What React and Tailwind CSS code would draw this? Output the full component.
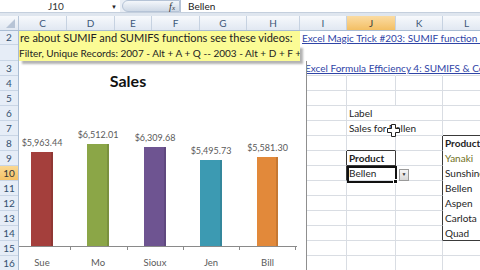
import React from "react";

const RC = {
  g: "border-r border-r-[#d9dde3]",
  d: "border-r border-r-[#3a3a3a]",
  n: "border-r border-r-transparent",
};
const BC = {
  g: "border-b border-b-[#d9dde3]",
  d: "border-b border-b-[#3a3a3a]",
  n: "border-b border-b-transparent",
};

function Cell({ r = "g", b = "g", children, cls = "" }) {
  return (
    <div
      className={`${RC[r]} ${BC[b]} flex items-center pl-[2px] whitespace-nowrap text-[10px] leading-none text-[#1e1e1e] ${cls}`}
    >
      {children}
    </div>
  );
}

const rowLabels = [
  ["2", "h-[14px]"],
  ["", "h-[16px]"],
  ["3", "h-[15px]"],
  ["4", "h-[15px]"],
  ["5", "h-[15px]"],
  ["6", "h-[15px]"],
  ["7", "h-[15px]"],
  ["8", "h-[15px]"],
  ["9", "h-[15px]"],
  ["10", "h-[15px]"],
  ["11", "h-[15px]"],
  ["12", "h-[15px]"],
  ["13", "h-[15px]"],
  ["14", "h-[15px]"],
  ["15", "h-[15px]"],
  ["16", "h-[15px]"],
];

const bars = [
  { n: "Sue", v: "$5,963.44", x: 12, w: 22, top: 91, c: "#a43f3c" },
  { n: "Mo", v: "$6,512.01", x: 68, w: 22, top: 83, c: "#8ba647" },
  { n: "Sioux", v: "$6,309.68", x: 125, w: 22, top: 86, c: "#6e5491" },
  { n: "Jen", v: "$5,495.73", x: 181, w: 22, top: 99, c: "#3c9ab2" },
  { n: "Bill", v: "$5,581.30", x: 238, w: 21, top: 96, c: "#e2893a" },
];

function Chart() {
  return (
    <svg width="287" height="210" className="block">
      <text x="109" y="26" textAnchor="middle" fontSize="16" fontWeight="700" fill="#111" fontFamily="Lato, sans-serif">
        Sales
      </text>
      {bars.map((b) => (
        <g key={b.n}>
          <rect x={b.x} y={b.top} width={b.w} height={185 - b.top} fill={b.c} />
          <rect x={b.x + b.w - 2} y={b.top} width={2} height={185 - b.top} fill="#000" opacity="0.12" />
          <text x={b.x + b.w / 2} y={b.top - 6.5} textAnchor="middle" fontSize="9" fill="#5a5a5a" fontFamily="Lato, sans-serif">
            {b.v}
          </text>
          <text x={b.x + b.w / 2} y="204.5" textAnchor="middle" fontSize="9.5" fill="#5a5a5a" fontFamily="Lato, sans-serif">
            {b.n}
          </text>
        </g>
      ))}
      <line x1="0" y1="185.5" x2="278" y2="185.5" stroke="#8a8a8a" />
      {[51, 108, 164, 220, 276].map((x) => (
        <line key={x} x1={x + 0.5} y1="185" x2={x + 0.5} y2="189" stroke="#8a8a8a" />
      ))}
    </svg>
  );
}

const headers = [
  ["C", "w-[48px]"],
  ["D", "w-[48px]"],
  ["E", "w-[37px]"],
  ["F", "w-[48px]"],
  ["G", "w-[47px]"],
  ["H", "w-[53px]"],
  ["I", "w-[47px]"],
  ["J", "w-[49px]"],
  ["K", "w-[47px]"],
  ["L", "w-[48px]"],
];

export default function App() {
  const link = "text-[#2f44a6] underline decoration-[#2f44a6] underline-offset-[1px]";
  return (
    <div className="relative w-[480px] h-[270px] overflow-hidden bg-white font-['Lato','Liberation_Sans',sans-serif]">
      {/* formula bar */}
      <div className="h-[13px] flex items-stretch bg-[#e9eef5] border-b border-[#c4cfdd]">
        <div className="w-[108px] bg-white flex items-center justify-center text-[10px] text-[#333] pl-[4px]">J10</div>
        <div className="w-[12px] bg-white flex items-center justify-center text-[6px] text-[#222]">▼</div>
        <div className="w-[2px]" />
        <div className="w-[58px] rounded-l-full bg-gradient-to-b from-[#f4f7fb] to-[#cfd9e6] border border-[#b5c3d6] flex items-center justify-end pr-[4px]">
          <span className="italic font-['Liberation_Serif',serif] text-[10px] text-[#333]">f<span className="text-[7px]">x</span></span>
        </div>
        <div className="flex-1 bg-white border-l border-[#b5c3d6] flex items-center pl-[7px] text-[10px] text-[#222]">Bellen</div>
      </div>
      <div className="h-[3px] bg-[#dfe6ef]" />
      {/* column headers */}
      <div className="h-[15px] flex bg-gradient-to-b from-[#f7f9fc] to-[#e1e8f2] border-b border-[#a9bcd3]">
        <div className="w-[19px] shrink-0 border-r border-[#b7c6d9] relative">
          <svg width="19" height="15" className="absolute inset-0">
            <polygon points="15,3 15,12 6,12" fill="#b7c4d6" />
          </svg>
        </div>
        {headers.map(([h, w]) => (
          <div
            key={h}
            className={`${w} shrink-0 border-r border-[#c6d2e1] flex items-center justify-center text-[10px] ${
              h === "J" ? "bg-gradient-to-b from-[#fbdca2] to-[#f3bf63] text-[#3a3a3a]" : "text-[#3d5778]"
            }`}
          >
            {h}
          </div>
        ))}
      </div>
      {/* body */}
      <div className="flex">
        {/* row headers */}
        <div className="w-[19px] shrink-0 flex flex-col bg-[#e6edf7] border-r border-[#a9bcd3]">
          {rowLabels.map(([l, h], i) => (
            <div
              key={i}
              className={`${h} shrink-0 border-b border-[#c9d5e5] flex items-center justify-center text-[10px] ${
                l === "10" ? "bg-gradient-to-b from-[#fbd993] to-[#f4c166] text-[#333]" : "text-[#34506f]"
              }`}
            >
              {l}
            </div>
          ))}
        </div>
        {/* C-H: banner + chart */}
        <div className="w-[281px] shrink-0 flex flex-col">
          <div className="h-[14px] bg-[#fbfb95] flex items-center pl-[1px] whitespace-nowrap overflow-hidden text-[11px] text-[#222]">
            re about SUMIF and SUMIFS functions see these videos:
          </div>
          <div className="h-[16px] relative z-20 bg-[#fbfb95] flex items-center whitespace-nowrap overflow-hidden text-[10px] text-[#222] shadow-[3px_3px_2px_rgba(0,0,0,0.3)]">
            Filter, Unique Records: 2007 - Alt + A + Q -- 2003 - Alt + D + F +
          </div>
          <div className="relative z-10 w-[288px] h-[210px] bg-white border-r border-[#8f8f8f]">
            <Chart />
          </div>
        </div>
        {/* I-L grid */}
        <div className="w-[191px] shrink-0 grid grid-cols-[47px_49px_47px_48px] grid-rows-[14px_16px_repeat(14,15px)]">
          {/* row 2 */}
          <Cell r="n" b="n"><span className={link}>Excel Magic Trick #203: SUMIF function see</span></Cell>
          <Cell r="n" b="n" />
          <Cell r="n" b="n" />
          <Cell r="n" b="n" />
          {/* strip row */}
          <Cell r="n" b="n" />
          <Cell r="n" b="n" />
          <Cell r="n" b="n" />
          <Cell r="n" b="n" />
          {/* row 3 */}
          <Cell r="n"><span className={`${link} pl-[3px]`}>Excel Formula Efficiency 4: SUMIFS &amp; Conditional</span></Cell>
          <Cell r="n" />
          <Cell r="n" />
          <Cell r="n" />
          {/* row 4 */}
          <Cell /><Cell /><Cell /><Cell />
          {/* row 5 */}
          <Cell /><Cell /><Cell /><Cell />
          {/* row 6 */}
          <Cell /><Cell r="n">Label</Cell><Cell /><Cell />
          {/* row 7 */}
          <Cell /><Cell r="n">Sales for Bellen</Cell><Cell /><Cell b="d" />
          {/* row 8 */}
          <Cell /><Cell b="d" /><Cell r="d" /><Cell b="n"><span className="font-bold">Product</span></Cell>
          {/* row 9 */}
          <Cell r="d" /><Cell r="d" b="d"><span className="font-bold">Product</span></Cell><Cell r="d" /><Cell b="n"><span className="text-[#6f6f22]">Yanaki</span></Cell>
          {/* row 10 */}
          <Cell r="d" /><Cell r="d">Bellen</Cell><Cell r="d" /><Cell b="n">Sunshine</Cell>
          {/* row 11 */}
          <Cell /><Cell /><Cell r="d" /><Cell b="n">Bellen</Cell>
          {/* row 12 */}
          <Cell /><Cell /><Cell r="d" /><Cell b="n">Aspen</Cell>
          {/* row 13 */}
          <Cell /><Cell /><Cell r="d" /><Cell b="n">Carlota</Cell>
          {/* row 14 */}
          <Cell /><Cell /><Cell r="d" /><Cell b="d">Quad</Cell>
          {/* row 15 */}
          <Cell /><Cell /><Cell /><Cell />
          {/* row 16 */}
          <Cell /><Cell /><Cell /><Cell />
        </div>
      </div>

      {/* selection box J10 */}
      <div className="absolute left-[347px] top-[166px] w-[50px] h-[17px] border-2 border-[#111] pointer-events-none" />
      <div className="absolute left-[393px] top-[179px] w-[5px] h-[5px] bg-[#111] border border-white" />
      {/* dropdown button */}
      <div className="absolute left-[399px] top-[169px] w-[10px] h-[12px] bg-gradient-to-b from-[#f6f6f6] to-[#d8d8d8] border border-[#9a9a9a] flex items-center justify-center text-[5px] text-[#333]">
        ▼
      </div>
      {/* cursor */}
      <svg className="absolute left-[387px] top-[124px]" width="13" height="13" viewBox="0 0 13 13">
        <path d="M4.5 0.5h4v4h4v4h-4v4h-4v-4h-4v-4h4z" fill="#fff" stroke="#222" strokeWidth="1" />
      </svg>
    </div>
  );
}
